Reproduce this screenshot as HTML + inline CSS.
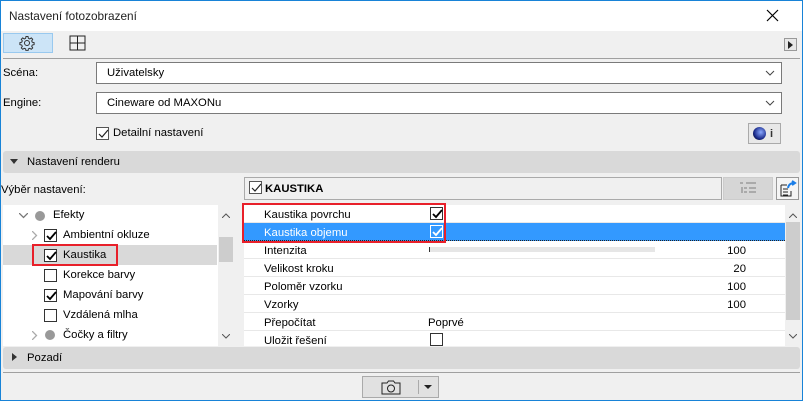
<!DOCTYPE html>
<html><head><meta charset="utf-8"><style>
*{box-sizing:border-box;margin:0;padding:0}
body{width:803px;height:401px;overflow:hidden;background:#f0f0f0;font-family:"Segoe UI","Liberation Sans",sans-serif;font-size:11.3px;color:#000;position:relative}
.a{position:absolute}
.frame{left:0;top:0;width:803px;height:401px;border:1px solid #1883d7}
.dd{background:#fff;border:1px solid #7a7a7a}
.cb{width:13px;height:13px;border:1px solid #333;background:#fff}
.t{white-space:nowrap;padding-top:1px}
.sec{background:#d9d9d9;border-radius:3px}
.row{left:0;width:541px;height:18px;border-bottom:1px solid #e8e8e8}
</style></head><body>
<div class="a" style="left:0;top:0;width:803px;height:31px;background:#fff"></div>
<div class="a t" style="left:9px;top:8px;font-size:11.8px;color:#222">Nastavení fotozobrazení</div>
<svg class="a" style="left:766px;top:9px" width="13" height="13"><path d="M1 1L12 12M12 1L1 12" stroke="#000" stroke-width="1.2"/></svg>
<div class="a" style="left:3px;top:33px;width:50px;height:20px;background:#cce4f7;border:1px solid #99c9ef"></div>
<svg class="a" style="left:19px;top:35px" width="16" height="16" viewBox="0 0 16 16"><circle cx="8" cy="8" r="2.5" fill="none" stroke="#333"/><path d="M7 1.5h2l.4 1.8 1.3.6 1.6-1 1.4 1.4-1 1.6.6 1.3 1.8.4v2l-1.8.4-.6 1.3 1 1.6-1.4 1.4-1.6-1-1.3.6-.4 1.8h-2l-.4-1.8-1.3-.6-1.6 1-1.4-1.4 1-1.6-.6-1.3-1.8-.4v-2l1.8-.4.6-1.3-1-1.6 1.4-1.4 1.6 1 1.3-.6z" fill="none" stroke="#333"/></svg>
<svg class="a" style="left:69px;top:35px" width="17" height="16"><rect x="1" y="1" width="15" height="14" fill="none" stroke="#222"/><path d="M8.5 1v14M1 8h15" stroke="#222"/></svg>
<div class="a" style="left:784px;top:38px;width:13px;height:13px;border:1px solid #999;background:#e8e8e8"></div>
<svg class="a" style="left:788px;top:41px" width="6" height="8"><path d="M0 0L5 4L0 8z" fill="#222"/></svg>
<div class="a" style="left:3px;top:58px;width:797px;height:1px;background:#a0a0a0"></div>
<div class="a t" style="left:3px;top:66px">Scéna:</div>
<div class="a dd" style="left:96px;top:62px;width:686px;height:22px"></div>
<div class="a t" style="left:107px;top:66px">Uživatelsky</div>
<svg class="a" style="left:765px;top:70px" width="10" height="6"><path d="M1 1l4 4 4-4" stroke="#444" fill="none"/></svg>
<div class="a t" style="left:3px;top:96px">Engine:</div>
<div class="a dd" style="left:96px;top:92px;width:686px;height:22px"></div>
<div class="a t" style="left:107px;top:96px">Cineware od MAXONu</div>
<svg class="a" style="left:765px;top:100px" width="10" height="6"><path d="M1 1l4 4 4-4" stroke="#444" fill="none"/></svg>
<div class="a cb" style="left:96px;top:127px;border-color:#555"></div>
<svg class="a" style="left:97px;top:128px" width="12" height="12"><path d="M2 6l3 3 6-7" stroke="#222" fill="none" stroke-width="1.2"/></svg>
<div class="a t" style="left:113px;top:126px">Detailní nastavení</div>
<div class="a" style="left:748px;top:123px;width:33px;height:21px;border:1px solid #aaa;background:#e8e8e8"></div>
<div class="a" style="left:753px;top:127px;width:13px;height:13px;border-radius:50%;background:radial-gradient(circle at 60% 40%,#8aa8ff,#1a2a8a 60%,#000)"></div>
<div class="a t" style="left:770px;top:127px;font-size:11px;color:#333;font-weight:bold">i</div>
<div class="a sec" style="left:3px;top:151px;width:797px;height:22px"></div>
<svg class="a" style="left:10px;top:159px" width="8" height="5"><path d="M0 0h8L4 5z" fill="#333"/></svg>
<div class="a t" style="left:27px;top:155px">Nastavení renderu</div>
<div class="a t" style="left:1px;top:183px">Výběr nastavení:</div>
<div class="a" style="left:244px;top:177px;width:478px;height:23px;border:1px solid #aaa;background:#f0f0f0"></div>
<div class="a cb" style="left:249px;top:181px;border-color:#555"></div>
<svg class="a" style="left:250px;top:182px" width="12" height="12"><path d="M2 6l3 3 6-7" stroke="#222" fill="none" stroke-width="1.2"/></svg>
<div class="a t" style="left:265px;top:182px;font-weight:bold">KAUSTIKA</div>
<div class="a" style="left:723px;top:177px;width:50px;height:23px;background:#d6d6d6;border:1px solid #ccc"></div>
<svg class="a" style="left:739px;top:182px" width="18" height="13"><path d="M1 1h3M7 1h10M3 5v6M5 6h3M10 6h7M5 10h3M10 10h7" stroke="#aaa" stroke-width="2"/></svg>
<div class="a" style="left:776px;top:177px;width:23px;height:23px;border:1px solid #999;background:#f5f5f5"></div>
<svg class="a" style="left:779px;top:179px" width="18" height="19"><path d="M2 6h6M2 6v11h10v-5M4 10h5M4 13h5M4 16h5" stroke="#222" fill="none"/><path d="M9 9q1-5 6-5M13 2l3 2-3 2" stroke="#1a7ee8" stroke-width="2" fill="none"/></svg>
<div class="a" style="left:3px;top:205px;width:231px;height:141px;background:#fff"></div>
<div class="a" style="left:218px;top:205px;width:16px;height:141px;background:#f0f0f0"></div>
<div class="a" style="left:219px;top:237px;width:14px;height:25px;background:#cdcdcd"></div>
<svg class="a" style="left:222px;top:213px" width="8" height="5"><path d="M0 5l4-4 4 4" stroke="#555" fill="none"/></svg>
<svg class="a" style="left:222px;top:334px" width="8" height="5"><path d="M0 0l4 4 4-4" stroke="#555" fill="none"/></svg>
<div class="a" style="left:3px;top:245px;width:214px;height:20px;background:#d9d9d9"></div>
<svg class="a" style="left:19px;top:213px" width="9" height="6"><path d="M0 0l4.5 4.5 4.5-4.5" stroke="#777" fill="none" stroke-width="1.3"/></svg>
<div class="a" style="left:35px;top:211px;width:10px;height:10px;border-radius:50%;background:#999"></div>
<div class="a t" style="left:53px;top:208px">Efekty</div>
<svg class="a" style="left:32px;top:231px" width="6" height="9"><path d="M0 0l4.5 4.5L0 9" stroke="#aaa" fill="none" stroke-width="1.3"/></svg>
<div class="a t" style="left:63px;top:228px">Ambientní okluze</div>
<div class="a t" style="left:63px;top:248px">Kaustika</div>
<div class="a t" style="left:63px;top:268px">Korekce barvy</div>
<div class="a t" style="left:63px;top:288px">Mapování barvy</div>
<div class="a t" style="left:63px;top:308px">Vzdálená mlha</div>
<svg class="a" style="left:32px;top:331px" width="6" height="9"><path d="M0 0l4.5 4.5L0 9" stroke="#aaa" fill="none" stroke-width="1.3"/></svg>
<div class="a" style="left:45px;top:330px;width:10px;height:10px;border-radius:50%;background:#999"></div>
<div class="a t" style="left:63px;top:328px">Čočky a filtry</div>
<div class="a cb" style="left:44px;top:229px"></div><svg class="a" style="left:45px;top:230px" width="12" height="12"><path d="M2 6l3 3 6-7" stroke="#000" fill="none" stroke-width="1.8"/></svg>
<div class="a cb" style="left:44px;top:249px"></div><svg class="a" style="left:45px;top:250px" width="12" height="12"><path d="M2 6l3 3 6-7" stroke="#000" fill="none" stroke-width="1.8"/></svg>
<div class="a cb" style="left:44px;top:269px"></div>
<div class="a cb" style="left:44px;top:289px"></div><svg class="a" style="left:45px;top:290px" width="12" height="12"><path d="M2 6l3 3 6-7" stroke="#000" fill="none" stroke-width="1.8"/></svg>
<div class="a cb" style="left:44px;top:309px"></div>
<div class="a" style="left:32px;top:244px;width:86px;height:22px;border:2px solid #e8202a"></div>
<div class="a" style="left:244px;top:205px;width:557px;height:141px;background:#fff;overflow:hidden">
 <div class="a row" style="top:0"></div>
 <div class="a row" style="top:18px;background:#3399ff;border-bottom:1px dotted #222"></div>
 <div class="a row" style="top:36px"></div><div class="a row" style="top:54px"></div><div class="a row" style="top:72px"></div><div class="a row" style="top:90px"></div><div class="a row" style="top:108px"></div><div class="a row" style="top:126px"></div>
</div>
<div class="a" style="left:785px;top:205px;width:16px;height:141px;background:#f0f0f0"></div>
<div class="a" style="left:786px;top:222px;width:14px;height:98px;background:#cdcdcd"></div>
<svg class="a" style="left:789px;top:213px" width="8" height="5"><path d="M0 5l4-4 4 4" stroke="#555" fill="none"/></svg>
<svg class="a" style="left:789px;top:334px" width="8" height="5"><path d="M0 0l4 4 4-4" stroke="#555" fill="none"/></svg>
<div class="a t" style="left:264px;top:208px">Kaustika povrchu</div>
<div class="a t" style="left:264px;top:226px;color:#fff">Kaustika objemu</div>
<div class="a t" style="left:264px;top:244px">Intenzita</div>
<div class="a t" style="left:264px;top:262px">Velikost kroku</div>
<div class="a t" style="left:264px;top:280px">Poloměr vzorku</div>
<div class="a t" style="left:264px;top:298px">Vzorky</div>
<div class="a t" style="left:264px;top:316px">Přepočítat</div>
<div class="a t" style="left:264px;top:334px">Uložit řešení</div>
<div class="a" style="left:429px;top:247px;width:226px;height:5px;background:#e6e6e6;border-left:1px solid #333"></div>
<div class="a t" style="left:700px;top:244px;width:46px;text-align:right">100</div>
<div class="a t" style="left:700px;top:262px;width:46px;text-align:right">20</div>
<div class="a t" style="left:700px;top:280px;width:46px;text-align:right">100</div>
<div class="a t" style="left:700px;top:298px;width:46px;text-align:right">100</div>
<div class="a t" style="left:428px;top:316px">Poprvé</div>
<div class="a cb" style="left:430px;top:207px"></div><svg class="a" style="left:431px;top:208px" width="12" height="12"><path d="M2 6l3 3 6-7" stroke="#000" fill="none" stroke-width="1.8"/></svg>
<div class="a cb" style="left:430px;top:225px;border-color:#fff;background:#3399ff"></div><svg class="a" style="left:431px;top:226px" width="12" height="12"><path d="M2 6l3 3 6-7" stroke="#fff" fill="none" stroke-width="1.8"/></svg>
<div class="a cb" style="left:430px;top:333px"></div>
<div class="a" style="left:242px;top:203px;width:204px;height:40px;border:2px solid #e8202a"></div>
<div class="a sec" style="left:3px;top:347px;width:797px;height:22px"></div>
<svg class="a" style="left:12px;top:353px" width="5" height="8"><path d="M0 0l5 4-5 4z" fill="#333"/></svg>
<div class="a t" style="left:27px;top:351px">Pozadí</div>
<div class="a" style="left:3px;top:372px;width:797px;height:1px;background:#a0a0a0"></div>
<div class="a" style="left:362px;top:376px;width:77px;height:22px;border:1px solid #aaa;background:#e1e1e1"></div>
<svg class="a" style="left:381px;top:380px" width="20" height="15"><path d="M1 3h5l1.5-2h5L14 3h5v11H1z" fill="none" stroke="#222"/><circle cx="10" cy="8.5" r="3.5" fill="none" stroke="#222"/></svg>
<div class="a" style="left:418px;top:380px;width:1px;height:14px;background:#aaa"></div>
<svg class="a" style="left:424px;top:385px" width="8" height="5"><path d="M0 0h8L4 4z" fill="#222"/></svg>
<div class="a frame"></div>
</body></html>
